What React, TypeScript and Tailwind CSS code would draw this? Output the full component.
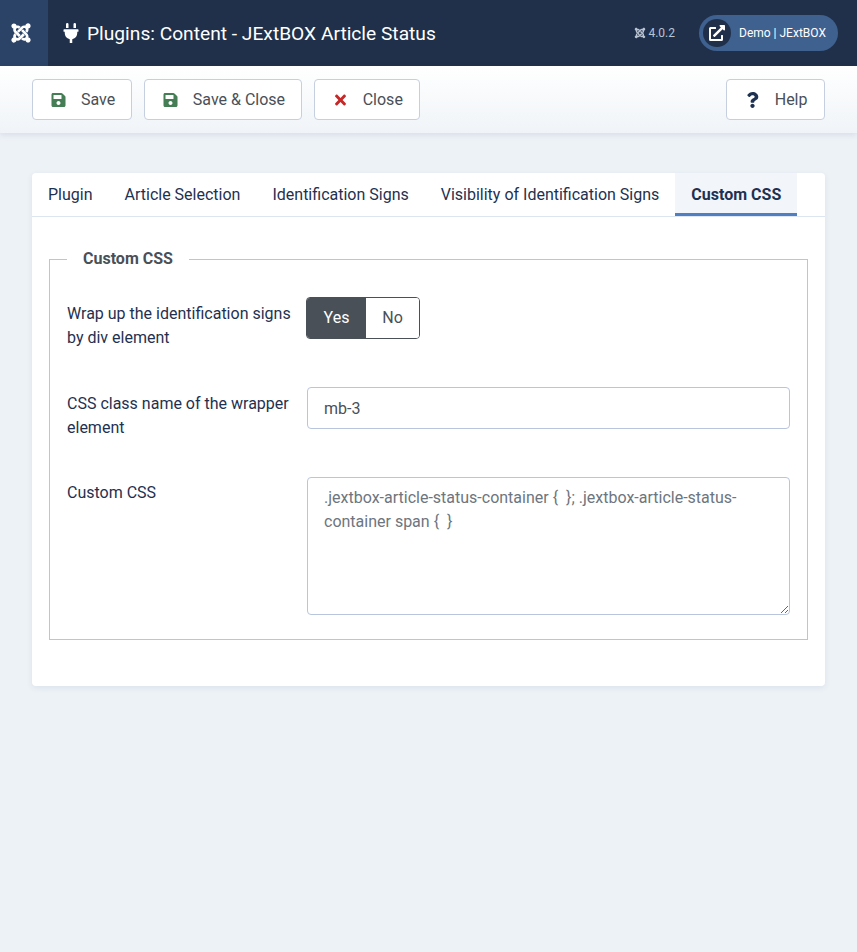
import React from "react";
import { FaJoomla, FaPlug, FaSave, FaTimes, FaQuestion, FaExternalLinkAlt } from "react-icons/fa";

function ToolbarButton({ icon, text, className }: { icon: React.ReactNode; text: string; className?: string }) {
  return (
    <button type="button" className={`flex h-[41px] items-center rounded-[4px] border border-[#c5cfdf] bg-white pl-[18px] text-[16px] text-[#495057] ${className ?? ""}`}>
      <span className="mr-[15px] flex w-[15px] justify-center">{icon}</span>
      {text}
    </button>
  );
}

const tabs = ["Plugin", "Article Selection", "Identification Signs", "Visibility of Identification Signs"];

export default function App() {
  return (
    <div className="flex min-h-[952px] flex-col bg-[#edf2f7] font-['Roboto',sans-serif] text-[16px] text-[#1f3150]">
      <header className="flex h-[66px] items-center bg-[#20304a] text-white">
        <div className="flex h-full w-[48px] items-center justify-center bg-[#2c4368]">
          <FaJoomla size={22} className="-ml-[6px]" />
        </div>
        <FaPlug size={20} className="ml-[13px] mr-[6px]" />
        <h1 className="mt-[2px] text-[19.2px]">Plugins: Content - JExtBOX Article Status</h1>
        <div className="ml-auto mr-[24px] flex items-center gap-[2px] text-[12px] text-[#b9c3d2]">
          <FaJoomla size={12} />
          <span>4.0.2</span>
        </div>
        <div className="mr-[19px] flex h-[36px] w-[139px] items-center rounded-full bg-[#3f618f] pl-[4px] text-[12px]">
          <span className="flex h-[28px] w-[28px] items-center justify-center rounded-full bg-[#20304a]">
            <FaExternalLinkAlt size={16} />
          </span>
          <span className="ml-[8px]">Demo | JExtBOX</span>
        </div>
      </header>

      <div className="flex h-[67px] items-center gap-[12px] bg-gradient-to-b from-white to-[#f0f4f8] px-[32px] shadow-[0_2px_6px_rgba(30,50,90,0.1)]">
        <ToolbarButton icon={<FaSave size={16} className="text-[#457d54]" />} text="Save" className="pr-[15.6px]" />
        <ToolbarButton icon={<FaSave size={16} className="text-[#457d54]" />} text="Save & Close" className="pr-[15.6px]" />
        <ToolbarButton icon={<FaTimes size={16} className="text-[#c52827]" />} text="Close" className="pr-[16.5px]" />
        <ToolbarButton icon={<FaQuestion size={16} className="text-[#1f3150]" />} text="Help" className="ml-auto pr-[16.5px]" />
      </div>

      <main className="mx-[32px] mt-[40px] rounded-[4px] bg-white pb-[46px] shadow-[0_2px_6px_rgba(30,50,90,0.08)]">
        <nav className="flex h-[44px] border-b border-[#dde5f1]">
          {tabs.map((t) => (
            <div key={t} className="flex items-center px-[16px]">{t}</div>
          ))}
          <div className="flex items-center border-b-[3px] border-[#4f7fc0] bg-[#f2f6fb] px-[16px] pt-[3px] font-bold">Custom CSS</div>
        </nav>

        <fieldset className="mx-[17px] mt-[30px] border border-[#b8c5dc] px-[17px] pb-[24px] pt-[26px]">
          <legend className="px-[16px] text-[16px] font-bold leading-[24px] text-[#495057]">Custom CSS</legend>

          <div className="flex">
            <label className="w-[239px] shrink-0 pt-[5px] leading-[24px]">Wrap up the identification signs by div element</label>
            <div className="flex h-[42px] w-[114px] overflow-hidden rounded-[4px] border border-[#495057]">
              <span className="flex w-[59px] items-center justify-center bg-[#495057] text-white">Yes</span>
              <span className="flex flex-1 items-center justify-center bg-white text-[#495057]">No</span>
            </div>
          </div>

          <div className="mt-[37px] flex">
            <label className="w-[240px] shrink-0 pt-[5px] leading-[24px]">CSS class name of the wrapper element</label>
            <input
              readOnly
              value="mb-3"
              className="h-[42px] w-[483px] rounded-[4px] border border-[#b8c5dc] bg-white px-[16px] text-[16px] text-[#495057] outline-none"
            />
          </div>

          <div className="mt-[37px] flex">
            <label className="w-[240px] shrink-0 pt-[4px] leading-[24px]">Custom CSS</label>
            <textarea
              readOnly
              value=".jextbox-article-status-container {  }; .jextbox-article-status-container span {  }"
              className="h-[138px] w-[483px] rounded-[4px] border border-[#b8c5dc] bg-white px-[16px] py-[8px] text-[16px] leading-[24px] text-[#6d757e] outline-none"
            />
          </div>
        </fieldset>
      </main>
    </div>
  );
}
